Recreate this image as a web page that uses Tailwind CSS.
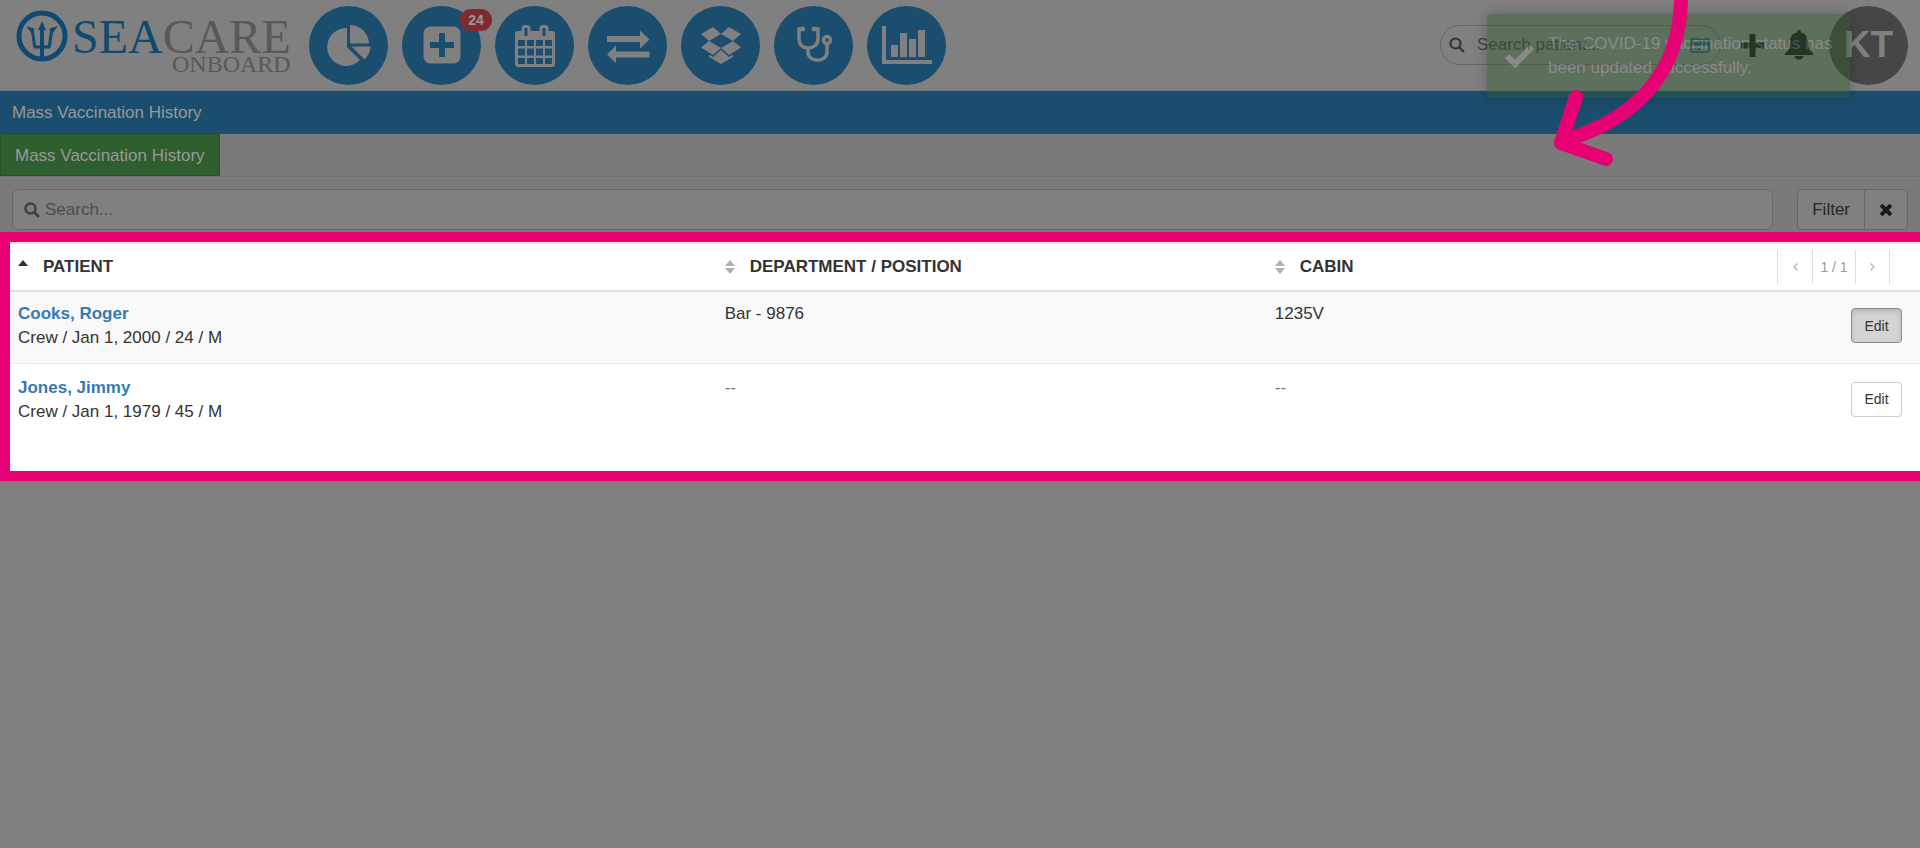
<!DOCTYPE html>
<html lang="en">
<head>
<meta charset="utf-8">
<meta name="viewport" content="width=device-width, initial-scale=1">
<title>Mass Vaccination History</title>
<script src="https://cdn.jsdelivr.net/npm/@tailwindcss/browser@4"></script>
</head>
<body class="relative min-h-screen overflow-x-hidden bg-[#808080] font-['Liberation_Sans',Arial,sans-serif] text-[17px] leading-6 text-[#333]">

<header class="flex h-[91px] items-center border-b border-[#6b7a84] pr-3 pl-4">
  <a href="#" aria-label="SeaCare Onboard" class="flex w-[293px] shrink-0 items-start pb-2">
    <svg class="h-[52px] w-[52px] shrink-0" viewBox="0 0 52 52" fill="none" stroke="#0f4a72">
      <circle cx="26" cy="26" r="23" stroke-width="5"/>
      <path d="M26 17V49" stroke-width="4"/>
      <path d="M15 18C18 23 17 31 19 37H33C35 31 34 23 37 18" stroke-width="3"/>
      <path d="M26 11L30 20H22ZM10 16L19 19L16 24ZM42 16L33 19L36 24Z" fill="#0f4a72" stroke="none"/>
    </svg>
    <span class="flex flex-col items-end pt-2 pl-1 font-['Liberation_Serif',serif] text-[#595959]">
      <span class="text-[48px] leading-[38px]"><span class="text-[#0f4a72]">SEA</span>CARE</span>
      <span class="text-[24px] leading-4">ONBOARD</span>
    </span>
  </a>
  <nav class="flex gap-[14px]" aria-label="Main">
    <a href="#" aria-label="Dashboard" class="flex size-[79px] items-center justify-center rounded-full bg-[#1b4d6e] text-[#808080]">
      <svg class="size-11" viewBox="0 0 44 44" fill="currentColor"><path d="M20 5V24L33 37A19 19 0 1 1 20 5Z"/><path d="M23 2A19 19 0 0 1 42 20.500H23Z"/><path d="M24.500 23.500H43.500A19 19 0 0 1 37.500 36.500Z"/></svg>
    </a>
    <a href="#" aria-label="Medical, 24 new" class="relative flex size-[79px] items-center justify-center rounded-full bg-[#1b4d6e] text-[#808080]">
      <svg class="size-[38px]" viewBox="0 0 38 38"><rect x="0.500" y="0.500" width="37" height="37" rx="7" fill="currentColor"/><path d="M19 7V31M7 19H31" stroke="#1b4d6e" stroke-width="6"/></svg>
      <span class="absolute top-[3px] -right-[11px] flex h-[22px] w-8 items-center justify-center rounded-full bg-[#7d2b2d] text-sm font-bold text-[#999]">24</span>
    </a>
    <a href="#" aria-label="Calendar" class="flex size-[79px] items-center justify-center rounded-full bg-[#1b4d6e] text-[#808080]">
      <svg class="size-11" viewBox="0 0 44 44"><rect x="2" y="8" width="40" height="36" rx="3" fill="currentColor"/><rect x="8.500" y="2" width="9" height="14" rx="4" fill="currentColor"/><rect x="26.500" y="2" width="9" height="14" rx="4" fill="currentColor"/><path d="M13 5V13M31 5V13" stroke="#1b4d6e" stroke-width="3"/><path d="M5 17h7v6H5zM14 17h7v6h-7zM23 17h7v6h-7zM32 17h7v6h-7zM5 25.500h7v7H5zM14 25.500h7v7h-7zM23 25.500h7v7h-7zM32 25.500h7v7h-7zM5 35h7v6H5zM14 35h7v6h-7zM23 35h7v6h-7zM32 35h7v6h-7z" fill="#1b4d6e"/></svg>
    </a>
    <a href="#" aria-label="Transfers" class="flex size-[79px] items-center justify-center rounded-full bg-[#1b4d6e] text-[#808080]">
      <svg class="size-11" viewBox="0 0 44 44" fill="currentColor"><path d="M1 13H34V7.500L43.500 16.500L34 25.500V19H1ZM43.500 34.500H10V40L1 31.500L10 22.500V28.500H43.500Z"/></svg>
    </a>
    <a href="#" aria-label="Inventory" class="flex size-[79px] items-center justify-center rounded-full bg-[#1b4d6e] text-[#808080]">
      <svg class="size-10" viewBox="0 0 40 40" fill="currentColor"><path d="M12 2L20 9L8 16L0 9ZM28 2L40 9L32 16L20 9ZM8 16L20 23L12 30L0 22.500ZM32 16L40 22.500L28 30L20 23ZM20 25L28 32L32 29.500V32L20 39L8 32V29.500L12 32Z"/></svg>
    </a>
    <a href="#" aria-label="Consultations" class="flex size-[79px] items-center justify-center rounded-full bg-[#1b4d6e] text-[#808080]">
      <svg class="size-10" viewBox="0 0 40 40" fill="none" stroke="currentColor" stroke-width="3.500"><path d="M9 4H5V14C5 20 9 23 14 23S24 20 24 14V4H19M14 23V27C14 38 33 38 33 27V18"/><circle cx="33" cy="15" r="3.500"/><circle cx="8.500" cy="4" r="1.500" fill="currentColor" stroke-width="2"/><circle cx="20" cy="4" r="1.500" fill="currentColor" stroke-width="2"/></svg>
    </a>
    <a href="#" aria-label="Reports" class="flex size-[79px] items-center justify-center rounded-full bg-[#1b4d6e] text-[#808080]">
      <svg class="h-[38px] w-[50px]" viewBox="0 0 50 38" fill="currentColor"><path d="M0 0H4V34H50V38H0ZM9 19H16V31H9ZM18 7H25V31H18ZM27 13H34V31H27ZM36 4H43V31H36Z"/></svg>
    </a>
  </nav>

  <div class="ml-auto flex items-center">
    <div class="flex h-10 w-[281px] items-center rounded-full border border-[#666] pr-[10px] pl-2">
      <svg class="size-4 shrink-0 text-[#333]" viewBox="0 0 16 16" fill="none" stroke="currentColor" stroke-width="2.200"><circle cx="6.500" cy="6.500" r="5"/><path d="M10 10L15 15"/></svg>
      <input type="text" aria-label="Search patient" placeholder="Search patient..." class="ml-3 min-w-0 flex-1 bg-transparent placeholder:text-[#404040]">
      <svg class="h-[15px] w-5 shrink-0" viewBox="0 0 20 15" fill="none" stroke="#1b4d6e" stroke-width="1.500"><rect x="1" y="1" width="18" height="13" rx="1"/><path d="M1 5.500H19" stroke-width="4"/><path d="M4 11H11"/></svg>
    </div>
    <button type="button" aria-label="Add" class="ml-5"><svg class="size-[23px]" viewBox="0 0 23 23" stroke="#1a1a1a" stroke-width="6"><path d="M11.500 0V23M0 11.500H23"/></svg></button>
    <button type="button" aria-label="Notifications" class="ml-[21px]"><svg class="h-[30px] w-7" viewBox="0 0 28 30" fill="#1a1a1a"><path d="M14 0C15.500 0 16 1 16 2.500C21 3.500 23 7 23 12C23 19 25 21 28 23V25H0V23C3 21 5 19 5 12C5 7 7 3.500 12 2.500C12 1 12.500 0 14 0ZM9.500 26H18.500C18 31 10 31 9.500 26Z"/></svg></button>
    <button type="button" aria-label="Account KT" class="ml-4 flex size-[79px] items-center justify-center rounded-full bg-[#464646] text-[37px] font-bold text-[#808080]">KT</button>
  </div>
</header>

<h1 class="flex h-[43px] items-center bg-[#1b4d6e] px-3 text-[#999]">Mass Vaccination History</h1>

<nav class="flex h-[43px] border-b border-[#6c6c6c] bg-[#7a7a7a]" aria-label="Sections">
  <a href="#" class="flex items-center border border-[#275427] bg-[#2f5f2f] px-[14px] pt-[2px] text-[#999]">Mass Vaccination History</a>
</nav>

<div class="flex gap-6 bg-[#7a7a7a] px-3 pt-3 pb-[2px]">
  <div class="flex h-[41px] flex-1 items-center rounded-md border border-[#676767] bg-[#808080] px-[11px]">
    <svg class="size-4 shrink-0" viewBox="0 0 16 16" fill="none" stroke="#404040" stroke-width="2.500"><circle cx="6.500" cy="6.500" r="5"/><path d="M10 10L15 15"/></svg>
    <input type="text" aria-label="Search" placeholder="Search..." class="ml-[5px] min-w-0 flex-1 bg-transparent placeholder:text-[#4d4d4d]">
  </div>
  <div class="flex h-[41px] rounded border border-[#676767] bg-[#808080] text-[#262626]">
    <button type="button" class="border-r border-[#676767] px-[14px]">Filter</button>
    <button type="button" aria-label="Clear filter" class="px-[15px]"><svg class="size-3" viewBox="0 0 12 12" stroke="#1a1a1a" stroke-width="4"><path d="M1 1L11 11M11 1L1 11"/></svg></button>
  </div>
</div>

<main class="min-h-[249px] border-y-10 border-l-10 border-[#e60073] bg-white">
  <table class="w-full table-fixed border-collapse text-left">
    <colgroup><col class="w-[37%]"><col class="w-[28.800%]"><col></colgroup>
    <thead>
      <tr class="h-12 border-t-2 border-b-2 border-t-[#e3e3e3] border-b-[#e0e0e0]">
        <th class="pl-2 font-bold"><button type="button" class="flex items-center gap-[15px] uppercase"><svg class="mb-2 h-[6px] w-[10px]" viewBox="0 0 10 6" fill="#333"><path d="M0 6L5 0L10 6Z"/></svg>Patient</button></th>
        <th class="pl-2 font-bold"><button type="button" class="flex items-center gap-[15px] uppercase"><svg class="h-[14px] w-[10px]" viewBox="0 0 10 14" fill="#b0b0b0"><path d="M0 6L5 0L10 6ZM0 8H10L5 14Z"/></svg>Department / Position</button></th>
        <th class="pl-2 font-bold">
          <div class="flex items-center justify-between pr-[30px]">
            <button type="button" class="flex items-center gap-[15px] uppercase"><svg class="h-[14px] w-[10px]" viewBox="0 0 10 14" fill="#b0b0b0"><path d="M0 6L5 0L10 6ZM0 8H10L5 14Z"/></svg>Cabin</button>
            <div class="flex h-[34px] items-center border-x border-[#ddd] text-sm font-normal text-[#999]">
              <button type="button" aria-label="Previous page" class="flex w-[34px] justify-center"><svg class="h-2 w-[5px]" viewBox="0 0 5 8" fill="none" stroke="#bbb" stroke-width="1.500"><path d="M4.500 0.500L1 4L4.500 7.500"/></svg></button>
              <span class="flex h-full w-11 items-center justify-center border-x border-[#ddd]">1 / 1</span>
              <button type="button" aria-label="Next page" class="flex w-[33px] justify-center"><svg class="h-2 w-[5px]" viewBox="0 0 5 8" fill="none" stroke="#bbb" stroke-width="1.500"><path d="M0.500 0.500L4 4L0.500 7.500"/></svg></button>
            </div>
          </div>
        </th>
      </tr>
    </thead>
    <tbody class="align-top">
      <tr class="h-[72px] border-b border-[#e8eeee] bg-[#f9f9f9]">
        <td class="pt-[10px] pl-2"><a href="#" class="font-bold text-[#337ab7]">Cooks, Roger</a><br>Crew / Jan 1, 2000 / 24 / M</td>
        <td class="pt-[10px] pl-2">Bar - 9876</td>
        <td class="pt-[10px] pl-2"><div class="flex items-start justify-between pr-[18px]">1235V<button type="button" class="mt-[6px] h-[35px] w-[51px] rounded border border-[#8c8c8c] bg-[#d4d4d4] text-sm shadow-[inset_0_3px_5px_#00000020]">Edit</button></div></td>
      </tr>
      <tr class="h-[73px]">
        <td class="pt-3 pl-2"><a href="#" class="font-bold text-[#337ab7]">Jones, Jimmy</a><br>Crew / Jan 1, 1979 / 45 / M</td>
        <td class="pt-3 pl-2 text-[#777]">--</td>
        <td class="pt-3 pl-2 text-[#777]"><div class="flex items-start justify-between pr-[18px]">--<button type="button" class="mt-[6px] h-[35px] w-[51px] rounded border border-[#ccc] bg-white text-sm text-[#333]">Edit</button></div></td>
      </tr>
    </tbody>
  </table>
</main>

<div role="status" class="absolute top-[14px] right-[70px] flex w-[363px] items-center rounded bg-[#2e5c2e] py-[18px] pl-[18px] text-[#999] opacity-43 shadow-[0_0_12px_#00000080]">
  <svg class="mr-[14px] h-6 w-[29px] shrink-0" viewBox="0 0 29 24" fill="none" stroke="#999" stroke-width="6"><path d="M2 12L10 20L27 3"/></svg>
  <p>The COVID-19 vaccination status has been updated successfully.</p>
</div>

<svg class="absolute top-0 right-[220px] h-[180px] w-[220px]" viewBox="0 0 220 180" fill="none" stroke="#e60073" stroke-width="14" stroke-linecap="round" stroke-linejoin="round" aria-hidden="true">
  <path d="M201 -10C203 70 160 118 81 142M96 97L81 143L126 159"/>
</svg>
</body>
</html>
